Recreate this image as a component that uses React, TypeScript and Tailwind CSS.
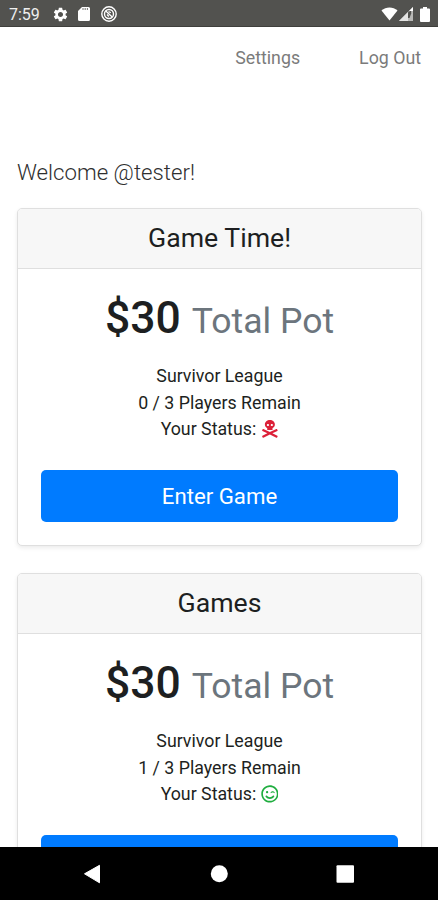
import { FaSkullCrossbones, FaRegSmileWink } from 'react-icons/fa'
import { MdSettings } from 'react-icons/md'

type Game = {
  title: string
  pot: number
  league: string
  remaining: number
  players: number
  alive: boolean
  action?: string
}

const GAMES: Game[] = [
  { title: 'Game Time!', pot: 30, league: 'Survivor League', remaining: 0, players: 3, alive: false, action: 'Enter Game' },
  { title: 'Games', pot: 30, league: 'Survivor League', remaining: 1, players: 3, alive: true },
]

function StatusBar() {
  return (
    <header className="flex h-[27px] shrink-0 items-center border-b border-[#3f3f3c] bg-[#52524f] pr-2 pl-[9px] pt-[2px] text-white">
      <span className="w-[43px] pt-px text-base leading-none text-[#efefef]">7:59</span>
      <MdSettings className="h-[17px] w-[17px]" />
      <svg viewBox="0 0 12 14" className="ml-[9px] h-[14px] w-3">
        <path
          d="M4 0h6.5A1.5 1.5 0 0 1 12 1.5v11a1.5 1.5 0 0 1-1.5 1.5h-9A1.5 1.5 0 0 1 0 12.500V4z"
          fill="currentColor"
        />
        <path d="M5 1.300v1.500M7.200 1.300v1.500M9.400 1.300v1.500" stroke="#52524f" strokeWidth="1.100" />
      </svg>
      <svg viewBox="0 0 16 16" className="ml-[11px] h-4 w-4" fill="none" stroke="currentColor">
        <circle cx="8" cy="8" r="7.200" strokeWidth="1.400" />
        <circle cx="8" cy="8" r="4.500" strokeWidth="1.400" />
        <path d="M4.800 5l6.400 6M7.500 5.500l2.300 1.300M6 8.500l1.800 2" strokeWidth="1.300" />
      </svg>
      <div className="ml-auto flex items-center">
        <svg viewBox="0 0 18 14" className="h-[14px] w-[17px]">
          <path d="M9 14L0.500 3.300C3 1.200 5.900 0 9 0s6 1.200 8.500 3.300z" fill="currentColor" />
        </svg>
        {/* Signal with partial strength */}
        <svg viewBox="0 0 14 14" className="ml-px h-[14px] w-[14px]">
          <path d="M14 0v14H0z" fill="#b9b9b7" />
          <path d="M9 5v9H0z" fill="#e4e4e3" />
          <path d="M9 5.500l3.200-2.500v3.500L10.500 11H9z" fill="#52524f" />
          <path d="M14 0v4h-1.500L10 4z" fill="currentColor" />
        </svg>
        <svg viewBox="0 0 10 15" className="ml-[7px] h-[15px] w-[10px]">
          <path d="M3 0h4v1.500h2a1 1 0 0 1 1 1V14a1 1 0 0 1-1 1H1a1 1 0 0 1-1-1V2.500a1 1 0 0 1 1-1h2z" fill="currentColor" />
        </svg>
      </div>
    </header>
  )
}

function GameCard({ game }: { game: Game }) {
  return (
    <section className="mb-[27px] overflow-hidden rounded-[5px] border border-[#dfdfdf] bg-white text-center shadow-[0_2px_4px_rgba(0,0,0,0.08)]">
      <div className="border-b border-[#dfdfdf] bg-[#f7f7f7] pt-[13px] pb-[14px]">
        <h4 className="text-[26.670px] leading-8 font-normal">{game.title}</h4>
      </div>
      <div className="p-[23px]">
        <h1 className="h-[53px] text-[44.440px] leading-[53px] font-medium">
          ${game.pot} <small className="text-[35.550px] font-normal text-[#6c757d]">Total Pot</small>
        </h1>
        <ul className="mt-[18px] mb-[27px] h-20 text-[17.780px] leading-[26.670px]">
          <li>{game.league}</li>
          <li>
            {game.remaining} / {game.players} Players Remain
          </li>
          <li>
            Your Status:{' '}
            {game.alive ? (
              <FaRegSmileWink className="inline-block align-[-2.500px] text-[#1fad3f]" />
            ) : (
              <FaSkullCrossbones className="inline-block align-[-2.500px] text-[#dc2038]" />
            )}
          </li>
        </ul>
        <button className="block h-[52px] w-full rounded-[5px] bg-[#007bff] text-[22.220px] leading-[33px] text-white">
          {game.action}
        </button>
      </div>
    </section>
  )
}

function NavBar() {
  return (
    <footer className="flex h-[53px] shrink-0 items-center bg-black text-white">
      <svg viewBox="0 0 438 53" className="h-[53px] w-full" fill="currentColor">
        <path d="M84.500 26.800L99.500 18.300v17.500z" stroke="currentColor" strokeLinejoin="round" />
        <circle cx="219.300" cy="26.700" r="8.500" />
        <rect x="336.500" y="18.200" width="17.500" height="17.500" rx="1" />
      </svg>
    </footer>
  )
}

export default function App() {
  return (
    <div className="flex h-[900px] w-[438px] flex-col overflow-hidden bg-white font-['Roboto',sans-serif] text-[#1d1f21]">
      <StatusBar />
      <main className="min-h-0 flex-1 overflow-hidden pr-4 pl-[17px]">
        <nav className="flex justify-end gap-[59px] pt-[18px] pr-px text-[17.780px] leading-[26.670px] text-[#7b7b7b]">
          <a>Settings</a>
          <a>Log Out</a>
        </nav>
        <p className="mt-[84.330px] mb-[19px] text-[22.220px] leading-[33px] font-light text-[#2f2f2f]">Welcome @tester!</p>
        {GAMES.map(game => (
          <GameCard key={game.title} game={game} />
        ))}
      </main>
      <NavBar />
    </div>
  )
}
